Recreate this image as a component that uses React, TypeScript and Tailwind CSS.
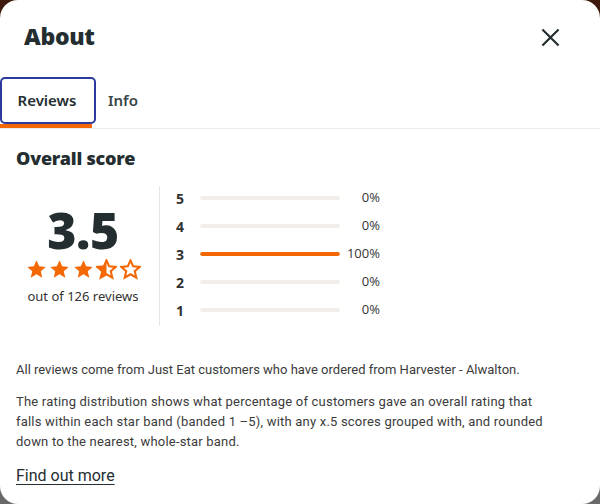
import React from "react";

const STAR = "M12 1.5l3.1 6.9 7.4.7-5.6 4.9 1.7 7.3L12 17.4l-6.6 3.9 1.7-7.3-5.6-4.9 7.4-.7z";

function Star({ kind }: { kind: "full" | "half" | "empty" }) {
  return (
    <svg width="21" height="21" viewBox="0 0 24 24" className="shrink-0">
      <defs>
        <clipPath id="lefthalf">
          <rect x="0" y="0" width="12" height="24" />
        </clipPath>
      </defs>
      {kind === "full" && <path d={STAR} fill="#f36805" />}
      {kind === "empty" && (
        <path d={STAR} fill="none" stroke="#f36805" strokeWidth="2.4" strokeLinejoin="miter" />
      )}
      {kind === "half" && (
        <>
          <path d={STAR} fill="none" stroke="#f36805" strokeWidth="2.4" />
          <path d={STAR} fill="#f36805" clipPath="url(#lefthalf)" />
        </>
      )}
    </svg>
  );
}

const rows = [
  { n: 5, p: 0 },
  { n: 4, p: 0 },
  { n: 3, p: 100 },
  { n: 2, p: 0 },
  { n: 1, p: 0 },
];

const heavy = { fontFamily: "'Noto Sans', sans-serif", fontWeight: 900 } as const;

export default function App() {
  return (
    <div className="w-[600px] h-[504px] bg-[linear-gradient(180deg,#3d1a0c_0%,#4a3430_50%,#6a6a6a_100%)]">
      <div
        className="w-[600px] h-[504px] bg-white rounded-[18px] overflow-hidden text-[#242e30] flex flex-col"
        style={{ fontFamily: "'Noto Sans', sans-serif" }}
      >
        <div className="flex items-center justify-between pl-6 pr-[40px] pt-[18px] h-[77px] pb-[22px]">
          <h1 className="text-[23px] tracking-[-0.3px]" style={heavy}>
            About
          </h1>
          <svg width="19" height="19" viewBox="0 0 20 20" className="mt-[2px]">
            <path d="M1.5 1.5L18.5 18.5M18.5 1.5L1.5 18.5" stroke="#242e30" strokeWidth="2.3" />
          </svg>
        </div>

        <div className="flex border-b border-[#ececec] h-[52px]">
          <div className="relative w-[96px]">
            <div className="h-[47px] border-2 border-[#2b3a9c] rounded-[5px] flex items-center justify-center text-[15px] font-semibold pr-[2px]">
              Reviews
            </div>
            <div className="absolute left-0 bottom-0 w-[92px] h-[4px] bg-[#f36805]" />
          </div>
          <div className="h-[47px] flex items-center pl-[12px] text-[15px] font-semibold text-[#3a4547]">Info</div>
        </div>

        <div className="px-4 pt-[18px]">
          <h2 className="text-[18px] leading-[22px] tracking-[-0.2px]" style={heavy}>
            Overall score
          </h2>

          <div className="flex mt-[17px]">
            <div className="w-[144px] pr-[9px] flex flex-col items-center border-r border-[#e4e4e4] h-[140px] pt-[19px]">
              <div className="text-[50px] leading-[50px] tracking-[-0.5px]" style={heavy}>
                3.5
              </div>
              <div className="flex gap-[2.5px] mt-[4px]">
                <Star kind="full" />
                <Star kind="full" />
                <Star kind="full" />
                <Star kind="half" />
                <Star kind="empty" />
              </div>
              <div className="text-[13px] mt-[7px] text-[#333]">out of 126 reviews</div>
            </div>

            <div className="flex flex-col pl-[16px] -mt-[2px]" style={{ fontFamily: "'Open Sans', sans-serif" }}>
              {rows.map((r) => (
                <div key={r.n} className="flex items-center h-[28px]">
                  <div className="w-[24px] text-[14px] font-bold text-[#333]">{r.n}</div>
                  <div className="w-[140px] h-[4px] rounded-full bg-[#f2efeb] overflow-hidden">
                    <div className="h-full bg-[#f36805] rounded-full" style={{ width: `${r.p}%` }} />
                  </div>
                  <div className="w-[40px] text-right text-[13px] text-[#333]">{r.p}%</div>
                </div>
              ))}
            </div>
          </div>

          <div
            className="w-[540px] text-[13px] text-[#3b3b3b] mt-[34px] leading-[20px]"
            style={{ fontFamily: "Roboto, sans-serif" }}
          >
            <p className="whitespace-nowrap">All reviews come from Just Eat customers who have ordered from Harvester - Alwalton.</p>
            <p className="mt-[12px] tracking-[0.2px]">
              The rating distribution shows what percentage of customers gave an overall rating that
              <br />
              falls within each star band (banded 1 –5), with any x.5 scores grouped with, and rounded
              <br />
              down to the nearest, whole-star band.
            </p>
            <p className="mt-[14px] text-[16px] underline underline-offset-[3px] text-[#242e30]">Find out more</p>
          </div>
        </div>
      </div>
    </div>
  );
}
